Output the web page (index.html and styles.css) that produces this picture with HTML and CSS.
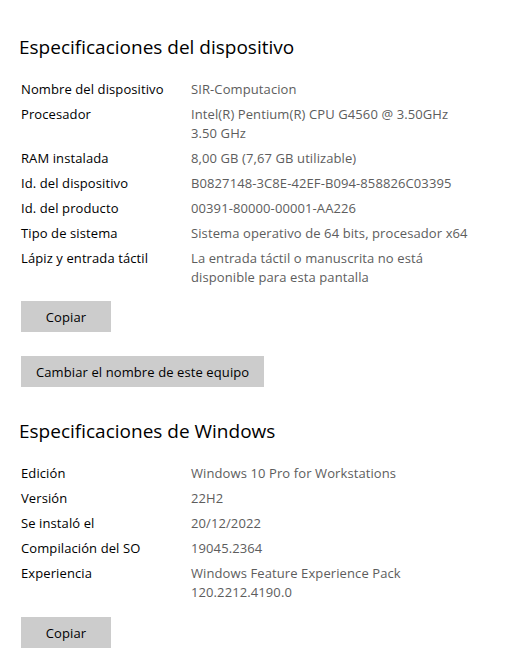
FILE: index.html
```html
<!DOCTYPE html>
<html lang="es">
<head>
<meta charset="utf-8">
<link rel="stylesheet" href="styles.css">
</head>
<body>
<div class="page">
  <section class="section">
    <h2 class="title">Especificaciones del dispositivo</h2>
    <dl class="specs">
      <dt>Nombre del dispositivo</dt><dd>SIR-Computacion</dd>
      <dt>Procesador</dt><dd>Intel(R) Pentium(R) CPU G4560 @ 3.50GHz<br>3.50 GHz</dd>
      <dt>RAM instalada</dt><dd>8,00 GB (7,67 GB utilizable)</dd>
      <dt>Id. del dispositivo</dt><dd>B0827148-3C8E-42EF-B094-858826C03395</dd>
      <dt>Id. del producto</dt><dd>00391-80000-00001-AA226</dd>
      <dt>Tipo de sistema</dt><dd>Sistema operativo de 64 bits, procesador x64</dd>
      <dt>Lápiz y entrada táctil</dt><dd>La entrada táctil o manuscrita no está<br>disponible para esta pantalla</dd>
    </dl>
    <button class="btn btn-copy">Copiar</button>
    <button class="btn btn-rename">Cambiar el nombre de este equipo</button>
  </section>
  <section class="section section-win">
    <h2 class="title">Especificaciones de Windows</h2>
    <dl class="specs">
      <dt>Edición</dt><dd>Windows 10 Pro for Workstations</dd>
      <dt>Versión</dt><dd>22H2</dd>
      <dt>Se instaló el</dt><dd>20/12/2022</dd>
      <dt>Compilación del SO</dt><dd>19045.2364</dd>
      <dt>Experiencia</dt><dd>Windows Feature Experience Pack<br>120.2212.4190.0</dd>
    </dl>
    <button class="btn btn-copy btn-copy-last">Copiar</button>
  </section>
</div>
</body>
</html>
```
FILE: styles.css
```css
html, body {
  margin: 0;
  padding: 0;
  background: #ffffff;
}
.page {
  font-family: "Open Sans", "Noto Sans", sans-serif;
  font-size: 13px;
  letter-spacing: 0.1px;
  color: #000000;
  padding: 33px 0 0 21px;
}
.section {
  display: flex;
  flex-direction: column;
  align-items: flex-start;
}
.section-win {
  margin-top: 30px;
}
.title {
  margin: 0 0 0 -2px;
  font-size: 19px;
  font-weight: 400;
  letter-spacing: 0;
  line-height: 28px;
  color: #000;
}
.specs {
  display: grid;
  grid-template-columns: 170px auto;
  row-gap: 6px;
  margin: 19px 0 0 0;
  line-height: 19px;
}
.specs dt {
  margin: 0;
}
.specs dd {
  margin: 0;
  color: #5d5d5d;
}
.btn {
  font-family: inherit;
  font-size: 13px;
  letter-spacing: 0.1px;
  color: #000;
  background: #cccccc;
  border: none;
  border-radius: 0;
  height: 31px;
  padding: 0 15px;
  margin: 0;
}
.btn-copy {
  width: 90px;
  margin-top: 14px;
}
.btn-copy-last {
  margin-top: 15px;
}
.btn-rename {
  margin-top: 24px;
}
```
